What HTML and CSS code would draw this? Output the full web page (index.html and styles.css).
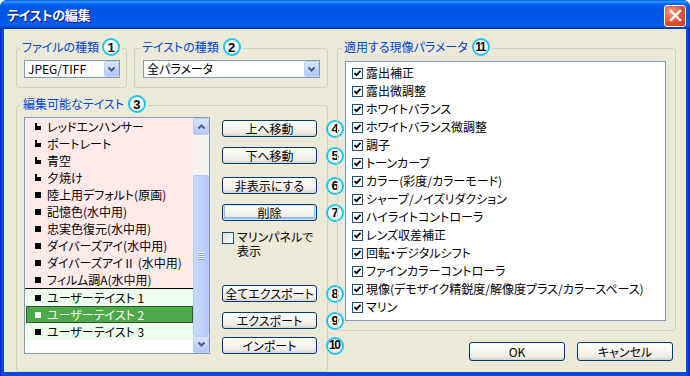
FILE: index.html
```html
<!DOCTYPE html>
<html lang="ja">
<head>
<meta charset="UTF-8">
<title>テイストの編集</title>
<link rel="stylesheet" href="styles.css">
</head>
<body>
<div class="window">
    <div class="titlebar">
        <span class="title">テイストの編集</span>
        <span class="close">
            <svg width="13" height="13" viewBox="0 0 13 13"><path d="M2 2l9 9M11 2l-9 9" stroke="#fff" stroke-width="2.4" stroke-linecap="square"/></svg>
        </span>
    </div>

    <div class="dialog">
        <div class="left">
            <div class="top-row">
                <fieldset class="group g-file">
                    <legend><span>ファイルの種類</span><i class="num">1</i></legend>
                    <div class="combo combo-file">
                        <span>JPEG/TIFF</span>
                        <span class="xp-btn"><svg width="9" height="7" viewBox="0 0 9 7"><path d="M1.5 1.5l3 3 3-3" fill="none" stroke="#4D6185" stroke-width="2"/></svg></span>
                    </div>
                </fieldset>
                <fieldset class="group g-kind">
                    <legend><span>テイストの種類</span><i class="num">2</i></legend>
                    <div class="combo combo-kind">
                        <span>全パラメータ</span>
                        <span class="xp-btn"><svg width="9" height="7" viewBox="0 0 9 7"><path d="M1.5 1.5l3 3 3-3" fill="none" stroke="#4D6185" stroke-width="2"/></svg></span>
                    </div>
                </fieldset>
            </div>

            <fieldset class="group g-taste">
                <legend><span>編集可能なテイスト</span><i class="num">3</i></legend>
                <div class="taste-body">
                    <div class="listbox">
                        <ul class="rows">
                            <li class="row pink"><svg class="ico" width="6" height="7" viewBox="0 0 6 7"><path d="M0 0h2v3h4v4H0z"/></svg>レッドエンハンサー</li>
                            <li class="row pink"><svg class="ico" width="6" height="7" viewBox="0 0 6 7"><path d="M0 0h2v3h4v4H0z"/></svg>ポートレート</li>
                            <li class="row pink"><svg class="ico" width="6" height="7" viewBox="0 0 6 7"><path d="M0 0h2v3h4v4H0z"/></svg>青空</li>
                            <li class="row pink"><svg class="ico" width="6" height="7" viewBox="0 0 6 7"><path d="M0 0h2v3h4v4H0z"/></svg>夕焼け</li>
                            <li class="row pink"><i class="sq"></i>陸上用デフォルト(原画)</li>
                            <li class="row pink"><i class="sq"></i>記憶色(水中用)</li>
                            <li class="row pink"><i class="sq"></i>忠実色復元(水中用)</li>
                            <li class="row pink"><i class="sq"></i>ダイバーズアイ(水中用)</li>
                            <li class="row pink"><i class="sq"></i>ダイバーズアイⅡ (水中用)</li>
                            <li class="row pink"><i class="sq"></i>フィルム調A(水中用)</li>
                            <li class="row user first"><i class="sq"></i>ユーザーテイスト 1</li>
                            <li class="row user selected"><i class="sq"></i>ユーザーテイスト 2</li>
                            <li class="row user"><i class="sq"></i>ユーザーテイスト 3</li>
                        </ul>
                        <div class="scrollbar">
                            <span class="xp-btn sb-btn"><svg width="9" height="7" viewBox="0 0 9 7"><path d="M1.5 5.5l3-3 3 3" fill="none" stroke="#4D6185" stroke-width="2"/></svg></span>
                            <div class="track"><div class="thumb"><span class="grip"></span></div></div>
                            <span class="xp-btn sb-btn"><svg width="9" height="7" viewBox="0 0 9 7"><path d="M1.5 1.5l3 3 3-3" fill="none" stroke="#4D6185" stroke-width="2"/></svg></span>
                        </div>
                    </div>

                    <div class="actions">
                        <div class="act a-up"><button class="btn">上へ移動</button><i class="num">4</i></div>
                        <div class="act a-down"><button class="btn">下へ移動</button><i class="num">5</i></div>
                        <div class="act a-hide"><button class="btn">非表示にする</button><i class="num">6</i></div>
                        <div class="act a-del"><button class="btn focus">削除</button><i class="num">7</i></div>
                        <label class="marine"><span class="cb"></span><span>マリンパネルで<br>表示</span></label>
                        <div class="act a-all"><button class="btn">全てエクスポート</button><i class="num">8</i></div>
                        <div class="act a-exp"><button class="btn">エクスポート</button><i class="num">9</i></div>
                        <div class="act a-imp"><button class="btn">インポート</button><i class="num n2">10</i></div>
                    </div>
                </div>
            </fieldset>
        </div>

        <div class="right">
            <fieldset class="group g-params">
                <legend><span>適用する現像パラメータ</span><i class="num n2">11</i></legend>
                <ul class="checklist">
                    <li><span class="cb on"></span>露出補正</li>
                    <li><span class="cb on"></span>露出微調整</li>
                    <li><span class="cb on"></span>ホワイトバランス</li>
                    <li><span class="cb on"></span>ホワイトバランス微調整</li>
                    <li><span class="cb on"></span>調子</li>
                    <li><span class="cb on"></span>トーンカーブ</li>
                    <li><span class="cb on"></span>カラー(彩度/カラーモード)</li>
                    <li><span class="cb on"></span>シャープ/ノイズリダクション</li>
                    <li><span class="cb on"></span>ハイライトコントローラ</li>
                    <li><span class="cb on"></span>レンズ収差補正</li>
                    <li><span class="cb on"></span>回転・デジタルシフト</li>
                    <li><span class="cb on"></span>ファインカラーコントローラ</li>
                    <li><span class="cb on"></span>現像(デモザイク精鋭度/解像度プラス/カラースペース)</li>
                    <li><span class="cb on"></span>マリン</li>
                </ul>
            </fieldset>
            <div class="dlg-buttons">
                <button class="btn big">OK</button>
                <button class="btn big">キャンセル</button>
            </div>
        </div>
    </div>
</div>
</body>
</html>
```

FILE: styles.css
```css
* {
    box-sizing: border-box;
}

html, body {
    margin: 0;
    padding: 0;
}

body {
    width: 690px;
    height: 376px;
    overflow: hidden;
    background: #fff;
    font-family: "Noto Sans CJK JP", sans-serif;
    font-size: 12px;
    font-feature-settings: "palt";
    color: #000;
}

ul {
    list-style: none;
    margin: 0;
    padding: 0;
}

.window {
    width: 690px;
    height: 376px;
    display: flex;
    flex-direction: column;
    background: linear-gradient(90deg, #0019CF, #0A48E2 2px, #0A48E2 calc(100% - 2px), #0019CF);
    border-radius: 7px 7px 0 0;
    overflow: hidden;
}

/* title bar */
.titlebar {
    height: 29px;
    flex-shrink: 0;
    display: flex;
    align-items: center;
    justify-content: space-between;
    padding: 0 4px 0 7px;
    background: linear-gradient(180deg, #0058EE 0%, #3593FF 5%, #1C80FF 9%, #0468FA 14%, #0057E5 24%, #0054E3 50%, #0058EC 70%, #0260F2 84%, #0052D6 92%, #0040AB 97%, #003092 100%);
}

.title {
    color: #fff;
    font-weight: bold;
    font-size: 13px;
    line-height: 16px;
    letter-spacing: -0.3px;
    text-shadow: 1px 1px 0 #0F1089;
    padding-top: 1px;
}

.close {
    width: 22px;
    height: 22px;
    margin-top: 2px;
    border: 1px solid #fff;
    border-radius: 3px;
    background: radial-gradient(circle at 30% 30%, #F39B82, #E2522E 55%, #C43A18);
    display: flex;
    align-items: center;
    justify-content: center;
}

/* dialog body */
.dialog {
    flex: 1;
    margin: 0 4px 4px;
    background: #ECE9D8;
    display: flex;
    gap: 9px;
    padding: 9px 10px 0 12px;
}

.left {
    width: 312px;
    display: flex;
    flex-direction: column;
    gap: 7px;
}

.top-row {
    display: flex;
    gap: 7px;
}

.group {
    margin: 0;
    min-width: 0;
    border: 1px solid #D0D0BF;
    border-radius: 3px;
    padding: 2px 7px 9px;
}

.group legend {
    display: flex;
    align-items: center;
    gap: 4px;
    width: max-content;
    height: 20px;
    padding: 0 2px 2px;
    margin-left: -3px;
    color: #0046D5;
    line-height: 18px;
    white-space: nowrap;
}

.num {
    width: 18px;
    height: 18px;
    flex-shrink: 0;
    border: 2.5px solid #1CC6F0;
    border-radius: 50%;
    background: #fff;
    color: #000;
    font: bold 13px/13px "Liberation Sans", Arial, sans-serif;
    font-style: normal;
    display: flex;
    align-items: center;
    justify-content: center;
}

.num.n2 {
    letter-spacing: -1.5px;
    text-indent: -1.5px;
    font-size: 12px;
}

/* combo boxes */
.g-file {
    width: 111px;
    padding-right: 6px;
}

.g-file legend {
    margin-left: -4px;
    gap: 3px;
}

.g-kind {
    flex: 1;
    padding-left: 8px;
}

.combo {
    height: 18px;
    border: 1px solid #7F9DB9;
    background: #fff;
    display: flex;
    align-items: center;
    justify-content: space-between;
    padding: 0 0 0 3px;
    line-height: 16px;
}

.xp-btn {
    width: 15px;
    height: 16px;
    flex-shrink: 0;
    border: 1px solid #BACBF5;
    border-radius: 2px;
    background: linear-gradient(180deg, #DDE7FE, #C3D4FC 50%, #B4C8F8);
    display: flex;
    align-items: center;
    justify-content: center;
}

/* taste list */
.g-taste {
    flex: 1;
}

.taste-body {
    display: flex;
    gap: 12px;
}

.listbox {
    width: 186px;
    height: 237px;
    flex-shrink: 0;
    border: 1px solid #7F9DB9;
    background: #fff;
    display: flex;
}

.rows {
    flex: 1;
}

.row {
    height: 17px;
    line-height: 17px;
    display: flex;
    align-items: center;
    gap: 6px;
    padding-left: 10px;
    white-space: nowrap;
}

.row.pink {
    background: #FFEAEA;
}

.row.user {
    background: #EEFEEE;
}

.row.first {
    height: 18px;
    border-top: 1px solid #000;
}

.row.selected {
    background: #4CA94C;
    color: #fff;
    box-shadow: inset 0 0 0 1px #24622A;
    margin-left: 1px;
    padding-left: 9px;
}

.ico {
    width: 6px;
    height: 7px;
    flex-shrink: 0;
}

.sq {
    width: 6px;
    height: 6px;
    flex-shrink: 0;
    background: #000;
}

.selected .sq {
    background: #fff;
}

.scrollbar {
    width: 16px;
    display: flex;
    flex-direction: column;
    background: #F4F3EE;
}

.sb-btn {
    width: 16px;
    height: 17px;
}

.track {
    flex: 1;
    padding-top: 40px;
}

.thumb {
    height: 161px;
    border: 1px solid #B6C9F8;
    border-radius: 2px;
    background: linear-gradient(90deg, #CAD9FC, #BED0FB 60%, #B2C7F8);
    display: flex;
    align-items: center;
    justify-content: center;
}

.grip {
    width: 7px;
    height: 8px;
    background: repeating-linear-gradient(180deg, #EEF3FF 0 1px, #8CA8E8 1px 2px);
}

/* action buttons */
.actions {
    width: 125px;
    flex-shrink: 0;
    display: flex;
    flex-direction: column;
    padding-top: 3px;
}

.act {
    height: 17px;
    display: flex;
    align-items: center;
    gap: 9px;
}

.a-down,
.a-del,
.a-exp {
    margin-top: 10px;
}

.a-hide {
    margin-top: 13px;
}

.a-all {
    margin-top: auto;
}

.a-imp {
    margin-top: 8px;
}

.btn {
    width: 95px;
    height: 17px;
    flex-shrink: 0;
    padding: 0;
    border: 1px solid #003C74;
    border-radius: 3px;
    background: linear-gradient(180deg, #FFFFFF, #F6F5F0 45%, #ECEBE5 80%, #D8D3C7);
    font-family: inherit;
    font-size: 12px;
    font-feature-settings: "palt";
    line-height: 15px;
    color: #000;
}

.btn.focus {
    box-shadow: inset 0 0 0 1px #CFE3FD, inset 0 -1px 0 2px #9DBBEB;
}

.btn.big {
    width: 96px;
    height: 19px;
    line-height: 17px;
}

.marine {
    margin-top: 9px;
    display: flex;
    gap: 3px;
    line-height: 14px;
}

.cb {
    width: 12px;
    height: 12px;
    flex-shrink: 0;
    border: 1px solid #1C5180;
    background: linear-gradient(135deg, #DCDCD7, #FFFFFF);
}

.marine .cb {
    margin-top: 2px;
}

/* parameter list */
.right {
    width: 339px;
    display: flex;
    flex-direction: column;
}

.g-params {
    padding: 3px 9px 9px 7px;
}

.checklist {
    height: 260px;
    border: 1px solid #7F9DB9;
    background: #fff;
    padding-top: 2px;
}

.checklist li {
    height: 18px;
    line-height: 18px;
    display: flex;
    align-items: center;
    gap: 3px;
    padding-left: 6px;
    white-space: nowrap;
}

.checklist .cb {
    width: 11px;
    height: 11px;
    border-color: #1C5180;
    background: #fff url("data:image/svg+xml,%3Csvg xmlns='http://www.w3.org/2000/svg' width='9' height='9' viewBox='0 0 9 9'%3E%3Cpath d='M1.5 4.2l2 2 4-4.4' fill='none' stroke='%23000' stroke-width='1.8'/%3E%3C/svg%3E") center no-repeat;
}

.dlg-buttons {
    display: flex;
    justify-content: flex-end;
    gap: 12px;
    margin-top: 11px;
    padding-right: 3px;
}
```
